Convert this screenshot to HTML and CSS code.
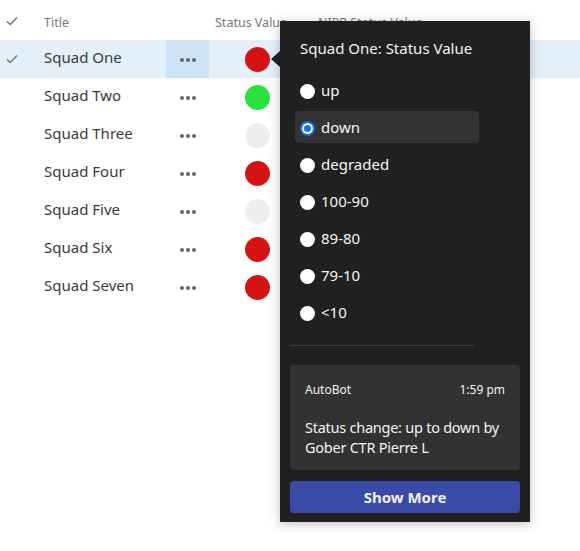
FILE: index.html
```html
<!DOCTYPE html>
<html>
<head>
<meta charset="utf-8">
<link rel="stylesheet" href="styles.css">
</head>
<body>
<div class="list">
  <div class="row header">
    <div class="c-check"><svg width="12" height="10" viewBox="0 0 12 10"><path d="M1 5.5 L4.2 8.5 L11 1.5" fill="none" stroke="#777" stroke-width="1.6"/></svg></div>
    <div class="c-title">Title</div>
    <div class="c-more"></div>
    <div class="c-status">Status Value</div>
    <div class="c-nipr">NIPR Status Value</div>
  </div>
  <div class="row selected">
    <div class="c-check"><svg width="12" height="10" viewBox="0 0 12 10"><path d="M1 5.5 L4.2 8.5 L11 1.5" fill="none" stroke="#777" stroke-width="1.6"/></svg></div>
    <div class="c-title">Squad One</div>
    <div class="c-more active"><span class="dots"><i></i><i></i><i></i></span></div>
    <div class="c-status"><span class="dot red"></span></div>
    <div class="c-nipr"></div>
  </div>
  <div class="row">
    <div class="c-check"></div>
    <div class="c-title">Squad Two</div>
    <div class="c-more"><span class="dots"><i></i><i></i><i></i></span></div>
    <div class="c-status"><span class="dot green"></span></div>
    <div class="c-nipr"></div>
  </div>
  <div class="row">
    <div class="c-check"></div>
    <div class="c-title">Squad Three</div>
    <div class="c-more"><span class="dots"><i></i><i></i><i></i></span></div>
    <div class="c-status"><span class="dot grey"></span></div>
    <div class="c-nipr"></div>
  </div>
  <div class="row">
    <div class="c-check"></div>
    <div class="c-title">Squad Four</div>
    <div class="c-more"><span class="dots"><i></i><i></i><i></i></span></div>
    <div class="c-status"><span class="dot red"></span></div>
    <div class="c-nipr"></div>
  </div>
  <div class="row">
    <div class="c-check"></div>
    <div class="c-title">Squad Five</div>
    <div class="c-more"><span class="dots"><i></i><i></i><i></i></span></div>
    <div class="c-status"><span class="dot grey"></span></div>
    <div class="c-nipr"></div>
  </div>
  <div class="row">
    <div class="c-check"></div>
    <div class="c-title">Squad Six</div>
    <div class="c-more"><span class="dots"><i></i><i></i><i></i></span></div>
    <div class="c-status"><span class="dot red"></span></div>
    <div class="c-nipr"></div>
  </div>
  <div class="row">
    <div class="c-check"></div>
    <div class="c-title">Squad Seven</div>
    <div class="c-more"><span class="dots"><i></i><i></i><i></i></span></div>
    <div class="c-status"><span class="dot red"></span></div>
    <div class="c-nipr"></div>
  </div>

  <div class="popup">
    <span class="beak"></span>
    <div class="popup-title">Squad One: Status Value</div>
    <div class="options">
      <label class="opt"><span class="radio"></span>up</label>
      <label class="opt checked"><span class="radio"></span>down</label>
      <label class="opt"><span class="radio"></span>degraded</label>
      <label class="opt"><span class="radio"></span>100-90</label>
      <label class="opt"><span class="radio"></span>89-80</label>
      <label class="opt"><span class="radio"></span>79-10</label>
      <label class="opt"><span class="radio"></span>&lt;10</label>
    </div>
    <div class="divider"></div>
    <div class="card">
      <div class="card-head"><span>AutoBot</span><span>1:59 pm</span></div>
      <div class="card-msg">Status change: up to down by Gober CTR Pierre L</div>
    </div>
    <button class="show-more">Show More</button>
  </div>
</div>
</body>
</html>
```
FILE: styles.css
```css
* { box-sizing: border-box; }
html, body { margin: 0; padding: 0; background: #fff; }
body {
  font-family: "Noto Sans", "Open Sans", sans-serif;
  color: #323130;
}
.list {
  position: relative;
  width: 580px;
  height: 551px;
}
.row {
  display: grid;
  grid-template-columns: 36px 130px 43px 97px 1fr;
  height: 38px;
  align-items: center;
}
.row.header {
  height: 40px;
  font-size: 12.5px;
  color: #777;
  align-items: start;
  padding-top: 14px;
}
.row.header .c-title { padding-left: 8px; font-size: 12.5px; color: #777; margin-top: 0; }
.row.header .c-status { padding-left: 6px; white-space: nowrap; overflow: hidden; height: auto; }
.row.header .c-nipr { padding-left: 12px; white-space: nowrap; }
.row.header .c-check { height: auto; margin-top: 2px; }
.c-check { padding-left: 6px; display: flex; align-items: center; height: 100%; }
.c-title { padding-left: 8px; font-size: 15px; color: #3b3a39; white-space: nowrap; margin-top: -4px; }
.c-more { height: 100%; display: flex; align-items: center; justify-content: center; }
.c-more.active { background: #cce4f6; }
.c-status { height: 100%; display: flex; align-items: center; padding-left: 36px; }
.row.selected { background: #e3f0fa; }
.dots { display: flex; gap: 2px; margin-top: 1px; }
.dots i { width: 4px; height: 4px; border-radius: 50%; background: #666; display: block; }
.dot { width: 25px; height: 25px; border-radius: 50%; display: block; }
.dot.red { background: #d61212; }
.dot.green { background: #27e43a; }
.dot.grey { background: #eeeeee; }

.popup {
  position: absolute;
  left: 280px;
  top: 21px;
  width: 250px;
  height: 501px;
  background: #202020;
  box-shadow: 0 2px 10px rgba(0,0,0,0.25);
  padding: 10px 10px 9px;
  color: #f3f3f3;
  display: flex;
  flex-direction: column;
}
.beak {
  position: absolute;
  left: -9px;
  top: 30px;
  width: 0; height: 0;
  border-top: 8px solid transparent;
  border-bottom: 8px solid transparent;
  border-right: 9px solid #202020;
}
.popup-title {
  padding-left: 10px;
  font-size: 15px;
  line-height: 20px;
  margin-top: 7px;
  height: 36px;
}
.options {
  display: flex;
  flex-direction: column;
  gap: 5px;
  margin-left: 5px;
}
.opt {
  width: 184px;
  height: 32px;
  display: flex;
  align-items: center;
  padding-left: 5px;
  font-size: 15px;
  border-radius: 4px;
  color: #f6f6f6;
}
.opt.checked { background: #333333; }
.radio {
  width: 15px; height: 15px;
  border-radius: 50%;
  background: #fff;
  margin-right: 6px;
  margin-top: 2px;
  flex: none;
}
.opt.checked .radio {
  background: #fff;
  border: 2px solid #1473e6;
  box-shadow: inset 0 0 0 2px #fff, inset 0 0 0 8px #1473e6;
}
.divider {
  width: 184px;
  height: 1px;
  background: #3a3a3a;
  margin-top: 17px;
}
.card {
  margin-top: 19px;
  background: #323232;
  border-radius: 4px;
  height: 105px;
  padding: 16px 12px 0 15px;
}
.card-head {
  display: flex;
  justify-content: space-between;
  font-size: 12px;
  line-height: 17px;
  padding-right: 3px;
}
.card-msg {
  margin-top: 19px;
  font-size: 14.5px;
  letter-spacing: -0.25px;
  line-height: 20px;
}
.show-more {
  margin-top: 11px;
  height: 32px;
  border: none;
  border-radius: 4px;
  background: #3a4aa8;
  color: #f2f2f2;
  font-family: inherit;
  font-size: 15px;
  font-weight: 700;
  width: 100%;
}
```
